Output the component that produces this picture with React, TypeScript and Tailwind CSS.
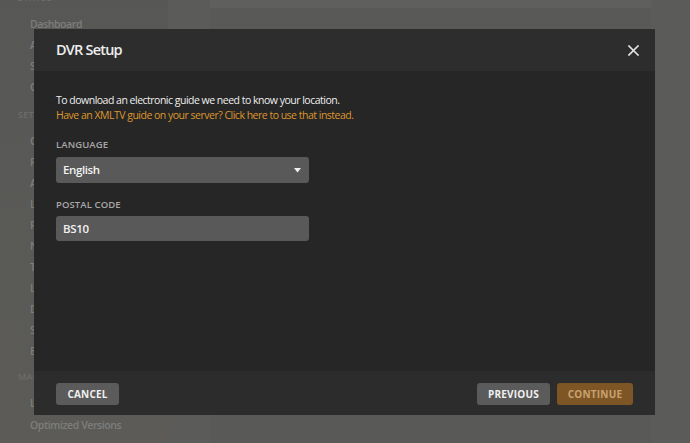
import React from "react";

const statusItems = ["Dashboard", "Alerts", "Sync", "Conversions"];
const settingsItems = [
  "Connect",
  "Remote Access",
  "Agents",
  "Library",
  "Plugins",
  "Network",
  "Transcoder",
  "Languages",
  "DLNA",
  "Scheduled Tasks",
  "Extras",
];

const item = "h-[21px] leading-[21px] pl-[30px] text-[10.5px] font-semibold text-[#7d7e7c] tracking-[-0.4px] whitespace-nowrap";
const header = "h-[20px] leading-[20px] pl-[18px] text-[9px] font-semibold text-[#6c6d6b] tracking-wide whitespace-nowrap";

export default function App() {
  return (
    <div
      className="relative w-[690px] h-[443px] overflow-hidden bg-[#5a5b59]"
      style={{ fontFamily: '"Open Sans", "Noto Sans", sans-serif' }}
    >
      <div className="flex h-full">
        {/* Sidebar */}
        <div className="w-[168px] h-full bg-gradient-to-b from-[#575856] to-[#5c5b58] flex flex-col">
          <div className={`${header} -mt-[12px]`}>STATUS</div>
          <div className="flex flex-col mt-[6px]">
            {statusItems.map((s) => (
              <div key={s} className={item}>
                {s}
              </div>
            ))}
          </div>
          <div className={`${header} mt-[7px]`}>SETTINGS</div>
          <div className="flex flex-col mt-[5.5px] gap-[0.1px]">
            {settingsItems.map((s) => (
              <div key={s} className={item}>
                {s}
              </div>
            ))}
          </div>
          <div className={`${header} mt-[4.4px]`}>MANAGE</div>
          <div className="flex flex-col mt-[6.5px] gap-[1px]">
            {["Libraries", "Optimized Versions"].map((s) => (
              <div key={s} className={item}>
                {s}
              </div>
            ))}
          </div>
        </div>
        {/* Main */}
        <div className="flex-1 h-full flex">
          <div className="w-[42px] bg-[#5b5c5a]" />
          <div className="w-[441px] flex flex-col">
            <div className="h-[8px] bg-[#5f605e]" />
            <div className="flex-1 bg-[#595a58]" />
          </div>
          <div className="flex-1 bg-[#5b5c5a]" />
        </div>
      </div>

      {/* Modal */}
      <div className="absolute left-[34px] top-[29px] w-[621px] h-[386px] flex flex-col">
        <div className="h-[42px] bg-[#2d2d2d] flex items-center justify-between pl-[22px] pr-[16px]">
          <div className="text-[14.5px] font-semibold text-[#eeeeee] tracking-[-0.8px]">DVR Setup</div>
          <svg width="11" height="11" viewBox="0 0 11 11">
            <path d="M1 1 L10 10 M10 1 L1 10" stroke="#e5e5e5" strokeWidth="1.6" strokeLinecap="square" />
          </svg>
        </div>
        <div className="flex-1 bg-[#262626] px-[22px] pt-[22px]">
          <div className="text-[10.5px] leading-[15px] text-[#eeeeee] tracking-[-0.5px] whitespace-nowrap">
            To download an electronic guide we need to know your location.
          </div>
          <div className="text-[10.5px] leading-[15px] text-[#de962c] tracking-[-0.5px] whitespace-nowrap">
            Have an XMLTV guide on your server? Click here to use that instead.
          </div>
          <div className="mt-[15px] text-[9.5px] font-semibold text-[#a8a8a8] leading-[14px] tracking-[0.1px]">
            LANGUAGE
          </div>
          <div className="mt-[5px] w-[253px] h-[26px] rounded-[3px] bg-[#595959] flex items-center justify-between pl-[7px] pr-[8px]">
            <span className="text-[11.5px] font-semibold text-[#f2f2f2] tracking-[-0.4px]">English</span>
            <svg width="7" height="5" viewBox="0 0 7 5">
              <path d="M0 0 L7 0 L3.5 4.5 Z" fill="#f0f0f0" />
            </svg>
          </div>
          <div className="mt-[15px] text-[9.5px] font-semibold text-[#a8a8a8] leading-[14px] tracking-[0.1px]">
            POSTAL CODE
          </div>
          <div className="mt-[4px] w-[253px] h-[25px] rounded-[3px] bg-[#595959] flex items-center pl-[7px]">
            <span className="text-[11.5px] font-semibold text-[#f2f2f2] tracking-[-0.3px]">BS10</span>
          </div>
        </div>
        <div className="h-[44px] bg-[#2c2c2c] flex items-start justify-between px-[22px] pt-[12px]">
          <button className="h-[22px] w-[63px] rounded-[3px] bg-[#5b5b5b] text-[10px] font-bold text-[#f0f0f0] tracking-[0.2px]">
            CANCEL
          </button>
          <div className="flex gap-[7px]">
            <button className="h-[22px] w-[73px] rounded-[3px] bg-[#5b5b5b] text-[10px] font-bold text-[#f0f0f0] tracking-[0.2px]">
              PREVIOUS
            </button>
            <button className="h-[22px] w-[76px] rounded-[3px] bg-[#7e5626] text-[10px] font-bold text-[#c9a271] tracking-[0.2px]">
              CONTINUE
            </button>
          </div>
        </div>
      </div>
    </div>
  );
}
